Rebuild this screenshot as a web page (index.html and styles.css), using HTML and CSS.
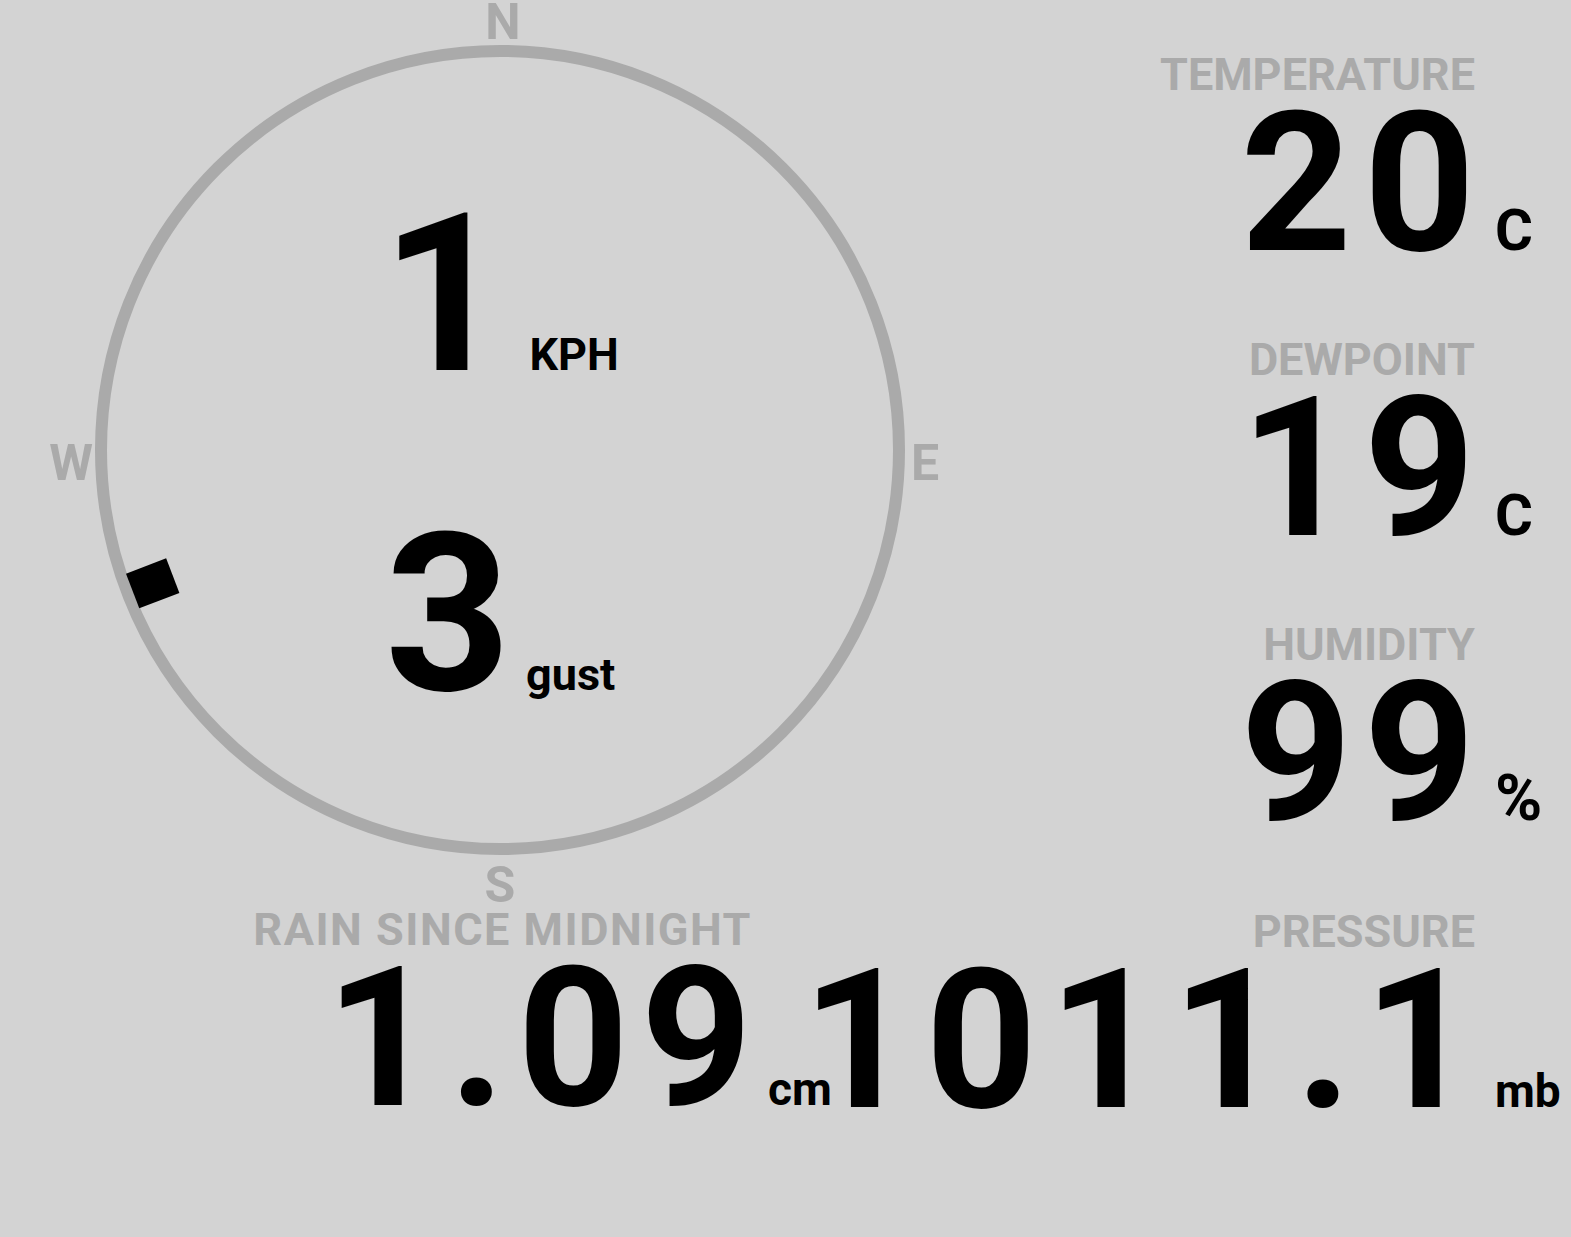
FILE: index.html
```html
<!DOCTYPE html>
<html lang="en">
<head>
    <meta charset="UTF-8">
    <meta name="viewport" content="width=device-width, initial-scale=1.0">
    <title>Weather Station</title>
    <link rel="stylesheet" href="styles.css">
</head>
<body>
    <div class="board">
        <div class="left">
            <div class="wind">
                <svg class="dial" width="1000" height="905" viewBox="0 0 1000 905">
                    <circle class="ring" cx="500" cy="450" r="399"/>
                    <text class="point" x="503" y="39">N</text>
                    <text class="point" x="925" y="480">E</text>
                    <text class="point" x="500" y="902">S</text>
                    <text class="point" x="71" y="480">W</text>
                    <!-- wind direction, degrees from north -->
                    <g transform="translate(500 450) rotate(249)">
                        <rect class="vane" x="-18.5" y="-393.5" width="37" height="43"/>
                    </g>
                </svg>
                <div class="speeds">
                    <div class="reading">
                        <span class="speed">1</span>
                        <span class="speed-unit kph">KPH</span>
                    </div>
                    <div class="reading">
                        <span class="speed">3</span>
                        <span class="speed-unit">gust</span>
                    </div>
                </div>
            </div>
            <div class="stat rain">
                <div class="label">RAIN SINCE MIDNIGHT</div>
                <div class="value">1.09</div>
                <div class="unit">cm</div>
            </div>
        </div>

        <div class="right">
            <div class="stat">
                <div class="label">TEMPERATURE</div>
                <div class="value">20</div>
                <div class="unit unit-lg">C</div>
            </div>
            <div class="stat">
                <div class="label">DEWPOINT</div>
                <div class="value">19</div>
                <div class="unit unit-lg">C</div>
            </div>
            <div class="stat">
                <div class="label">HUMIDITY</div>
                <div class="value">99</div>
                <div class="unit unit-pct">%</div>
            </div>
            <div class="stat">
                <div class="label">PRESSURE</div>
                <div class="value">1011.1</div>
                <div class="unit">mb</div>
            </div>
        </div>
    </div>
</body>
</html>
```

FILE: styles.css
```css
body {
    margin: 0;
    background-color: #d3d3d3;
    color: #000;
    font-family: Roboto, "Liberation Sans", sans-serif;
    font-weight: 700;
    overflow: hidden;
}
.board {
    display: flex;
    width: 1571px;
    height: 1237px;
}
.left {
    flex: none;
    width: 1000px;
    display: flex;
    flex-direction: column;
}
.wind {
    position: relative;
    height: 905px;
}
.dial {
    display: block;
}
.ring {
    fill: none;
    stroke: #aaa;
    stroke-width: 12;
}
.point {
    fill: #aaa;
    font-family: Roboto, "Liberation Sans", sans-serif;
    font-weight: 700;
    font-size: 50px;
    text-anchor: middle;
}
.vane {
    fill: #000;
}
.speeds {
    position: absolute;
    top: 0;
    left: 0;
    right: 0;
    bottom: 0;
    display: flex;
    flex-direction: column;
    align-items: center;
    padding-top: 185px;
    gap: 100px;
}
.reading {
    display: flex;
    align-items: baseline;
}
.speed {
    font-size: 220px;
    line-height: 220px;
}
.speed-unit {
    font-size: 45px;
    margin-left: 15px;
}
.kph {
    margin-left: 22px;
}

.right {
    flex: 1;
    min-width: 0;
    display: flex;
    flex-direction: column;
    align-items: flex-end;
    padding-top: 50px;
    gap: 71px;
}
.stat {
    display: grid;
    grid-template-columns: auto 96px;
    row-gap: 4px;
    align-items: baseline;
}
.label {
    grid-row: 1;
    grid-column: 1;
    justify-self: end;
    font-size: 45px;
    line-height: 50px;
    color: #aaa;
}
.value {
    grid-row: 2;
    grid-column: 1;
    justify-self: end;
    font-size: 194px;
    line-height: 160px;
    letter-spacing: 12px;
    margin-right: -12px;
}
.unit {
    grid-row: 2;
    grid-column: 2;
    padding-left: 20px;
    font-size: 46px;
}
.unit-lg {
    font-size: 58px;
}
.unit-pct {
    font-size: 64px;
}
.rain {
    grid-template-columns: 752px 80px;
}
.rain .label {
    letter-spacing: 1.5px;
}
.rain .unit {
    padding-left: 16px;
}
```
